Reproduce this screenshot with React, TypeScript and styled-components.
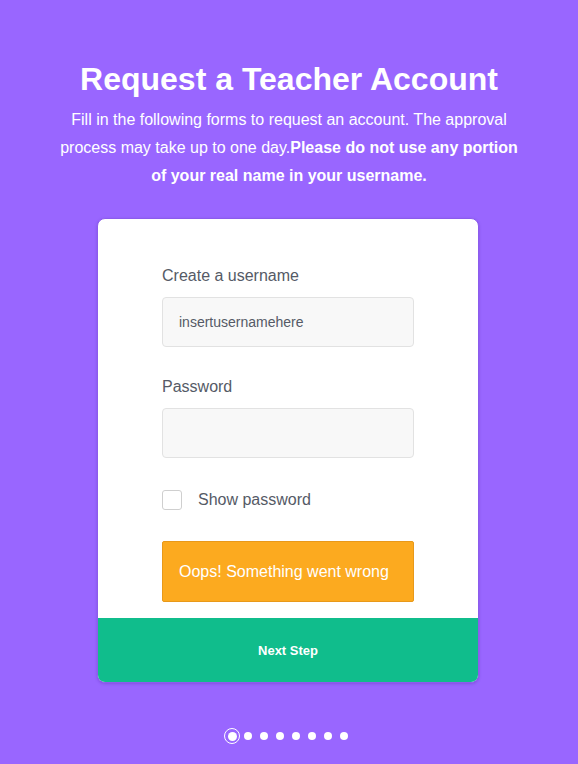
import styled, { createGlobalStyle } from "styled-components";

const GlobalStyle = createGlobalStyle`
    html, body {
        margin: 0;
        padding: 0;
        background: #9966ff;
        font-family: "Liberation Sans", Arial, sans-serif;
    }
`;

const Page = styled.main`
    display: flex;
    flex-direction: column;
    align-items: center;
    min-height: 764px;
    box-sizing: border-box;
    padding-top: 60px;
    background: #9966ff;
`;

const Title = styled.h1`
    margin: 0;
    color: #ffffff;
    font-size: 32px;
    line-height: 38px;
    font-weight: 700;
`;

const Intro = styled.p`
    margin: 8px 0 0;
    width: 470px;
    color: #ffffff;
    font-size: 16px;
    line-height: 28px;
    text-align: center;
    b {
        font-weight: 700;
    }
`;

const Card = styled.section`
    margin: 28px 2px 0 0;
    width: 382px;
    box-sizing: border-box;
    background: #ffffff;
    border: 1px solid #8c5cec;
    border-radius: 8px;
    overflow: hidden;
    box-shadow: 0 1px 3px rgba(60, 20, 140, 0.25);
`;

const Form = styled.div`
    display: flex;
    flex-direction: column;
    padding: 46px 64px 16px;
`;

const Label = styled.label`
    color: #555a66;
    font-size: 16px;
    line-height: 22px;
    margin-bottom: 10px;
`;

const Input = styled.input<{ $gap?: number }>`
    height: 50px;
    box-sizing: border-box;
    width: 100%;
    margin: 0 0 ${(p) => p.$gap ?? 29}px;
    padding: 0 16px;
    background: #f8f8f8;
    border: 1px solid #e2e2e2;
    border-radius: 4px;
    color: #555a66;
    font-family: "Liberation Sans", Arial, sans-serif;
    font-size: 14px;
    outline: none;
`;

const CheckRow = styled.label`
    display: flex;
    align-items: center;
    gap: 16px;
    color: #555a66;
    font-size: 16px;
    margin-bottom: 31px;
`;

const Box = styled.span`
    width: 20px;
    height: 20px;
    box-sizing: border-box;
    border: 1px solid #cfcfcf;
    border-radius: 3px;
    background: #ffffff;
`;

const Alert = styled.div`
    height: 61px;
    box-sizing: border-box;
    display: flex;
    align-items: center;
    padding: 0 16px;
    background: #fcaa1f;
    border: 1px solid #e8991a;
    border-radius: 2px;
    color: #ffffff;
    font-size: 16px;
`;

const NextButton = styled.button`
    display: block;
    width: 100%;
    height: 64px;
    border: none;
    background: #10bd8c;
    color: #ffffff;
    font-family: "Liberation Sans", Arial, sans-serif;
    font-size: 13px;
    font-weight: 700;
    cursor: pointer;
`;

const Dots = styled.div`
    display: flex;
    align-items: center;
    gap: 8px;
    margin: 45px 2px 0 0;
`;

const Dot = styled.span<{ $active?: boolean }>`
    display: flex;
    align-items: center;
    justify-content: center;
    width: 8px;
    height: 8px;
    border-radius: 50%;
    background: #ffffff;
    ${(p) =>
        p.$active &&
        `
        width: 16px;
        height: 16px;
        margin: 0 -4px;
        background: transparent;
        border: 1px solid #ffffff;
        box-sizing: border-box;
        &::after {
            content: "";
            width: 9px;
            height: 9px;
            border-radius: 50%;
            background: #ffffff;
        }
    `}
`;

export default function App() {
    return (
        <>
            <GlobalStyle />
            <Page>
                <Title>Request a Teacher Account</Title>
                <Intro>
                    Fill in the following forms to request an account. The approval process may take up to one day.
                    <b>Please do not use any portion of your real name in your username.</b>
                </Intro>
                <Card>
                    <Form>
                        <Label>Create a username</Label>
                        <Input defaultValue="insertusernamehere" />
                        <Label>Password</Label>
                        <Input type="password" $gap={32} />
                        <CheckRow>
                            <Box />
                            Show password
                        </CheckRow>
                        <Alert>Oops! Something went wrong</Alert>
                    </Form>
                    <NextButton>Next Step</NextButton>
                </Card>
                <Dots>
                    {Array.from({ length: 8 }).map((_, i) => (
                        <Dot key={i} $active={i === 0} />
                    ))}
                </Dots>
            </Page>
        </>
    );
}
